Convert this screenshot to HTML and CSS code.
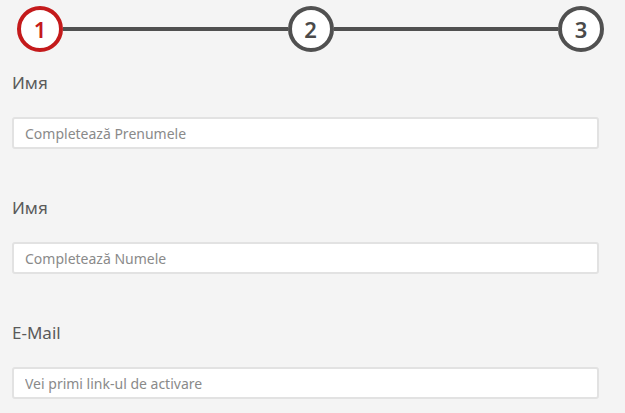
FILE: index.html
```html
<!DOCTYPE html>
<html lang="ro">
<head>
<meta charset="utf-8">
<link rel="stylesheet" href="styles.css">
</head>
<body>
<div class="page">
  <div class="stepper">
    <div class="step active">1</div>
    <div class="bar"></div>
    <div class="step">2</div>
    <div class="bar"></div>
    <div class="step">3</div>
  </div>
  <div class="field">
    <label class="label">Имя</label>
    <input class="input" type="text" placeholder="Completează Prenumele">
  </div>
  <div class="field">
    <label class="label">Имя</label>
    <input class="input" type="text" placeholder="Completează Numele">
  </div>
  <div class="field">
    <label class="label">E-Mail</label>
    <input class="input" type="text" placeholder="Vei primi link-ul de activare">
  </div>
</div>
</body>
</html>
```

FILE: styles.css
```css
html, body {
  margin: 0;
  padding: 0;
  background: #f4f4f4;
}
body {
  font-family: "Noto Sans", "Open Sans", sans-serif;
  color: #555;
}
.page {
  padding: 6px 26px 0 12px;
}
.stepper {
  display: flex;
  align-items: center;
  margin: 0 -5px 0 5px;
}
.step {
  box-sizing: border-box;
  width: 46px;
  height: 46px;
  border-radius: 50%;
  border: 4px solid #505050;
  background: #fff;
  display: flex;
  align-items: center;
  justify-content: center;
  font-size: 22px;
  font-weight: 600;
  color: #4a4a4a;
  flex: none;
}
.step.active {
  border-color: #c41a1b;
  color: #c41a1b;
}
.bar {
  flex: 1;
  height: 4px;
  background: #505050;
}
.field {
  display: flex;
  flex-direction: column;
}
.stepper + .field {
  margin-top: 20px;
}
.label {
  font-size: 17px;
  line-height: 22px;
  font-weight: 400;
  color: #5a5a5a;
  margin-bottom: 23px;
}
.input {
  box-sizing: border-box;
  height: 32px;
  border: 2px solid #e2e2e2;
  border-radius: 3px;
  background: #fff;
  padding: 0 11px;
  font-family: inherit;
  font-size: 14px;
  color: #555;
  margin-bottom: 48px;
  outline: none;
}
.field:last-child .input {
  margin-bottom: 0;
}
.input::placeholder {
  color: #8a8a8a;
}
```
